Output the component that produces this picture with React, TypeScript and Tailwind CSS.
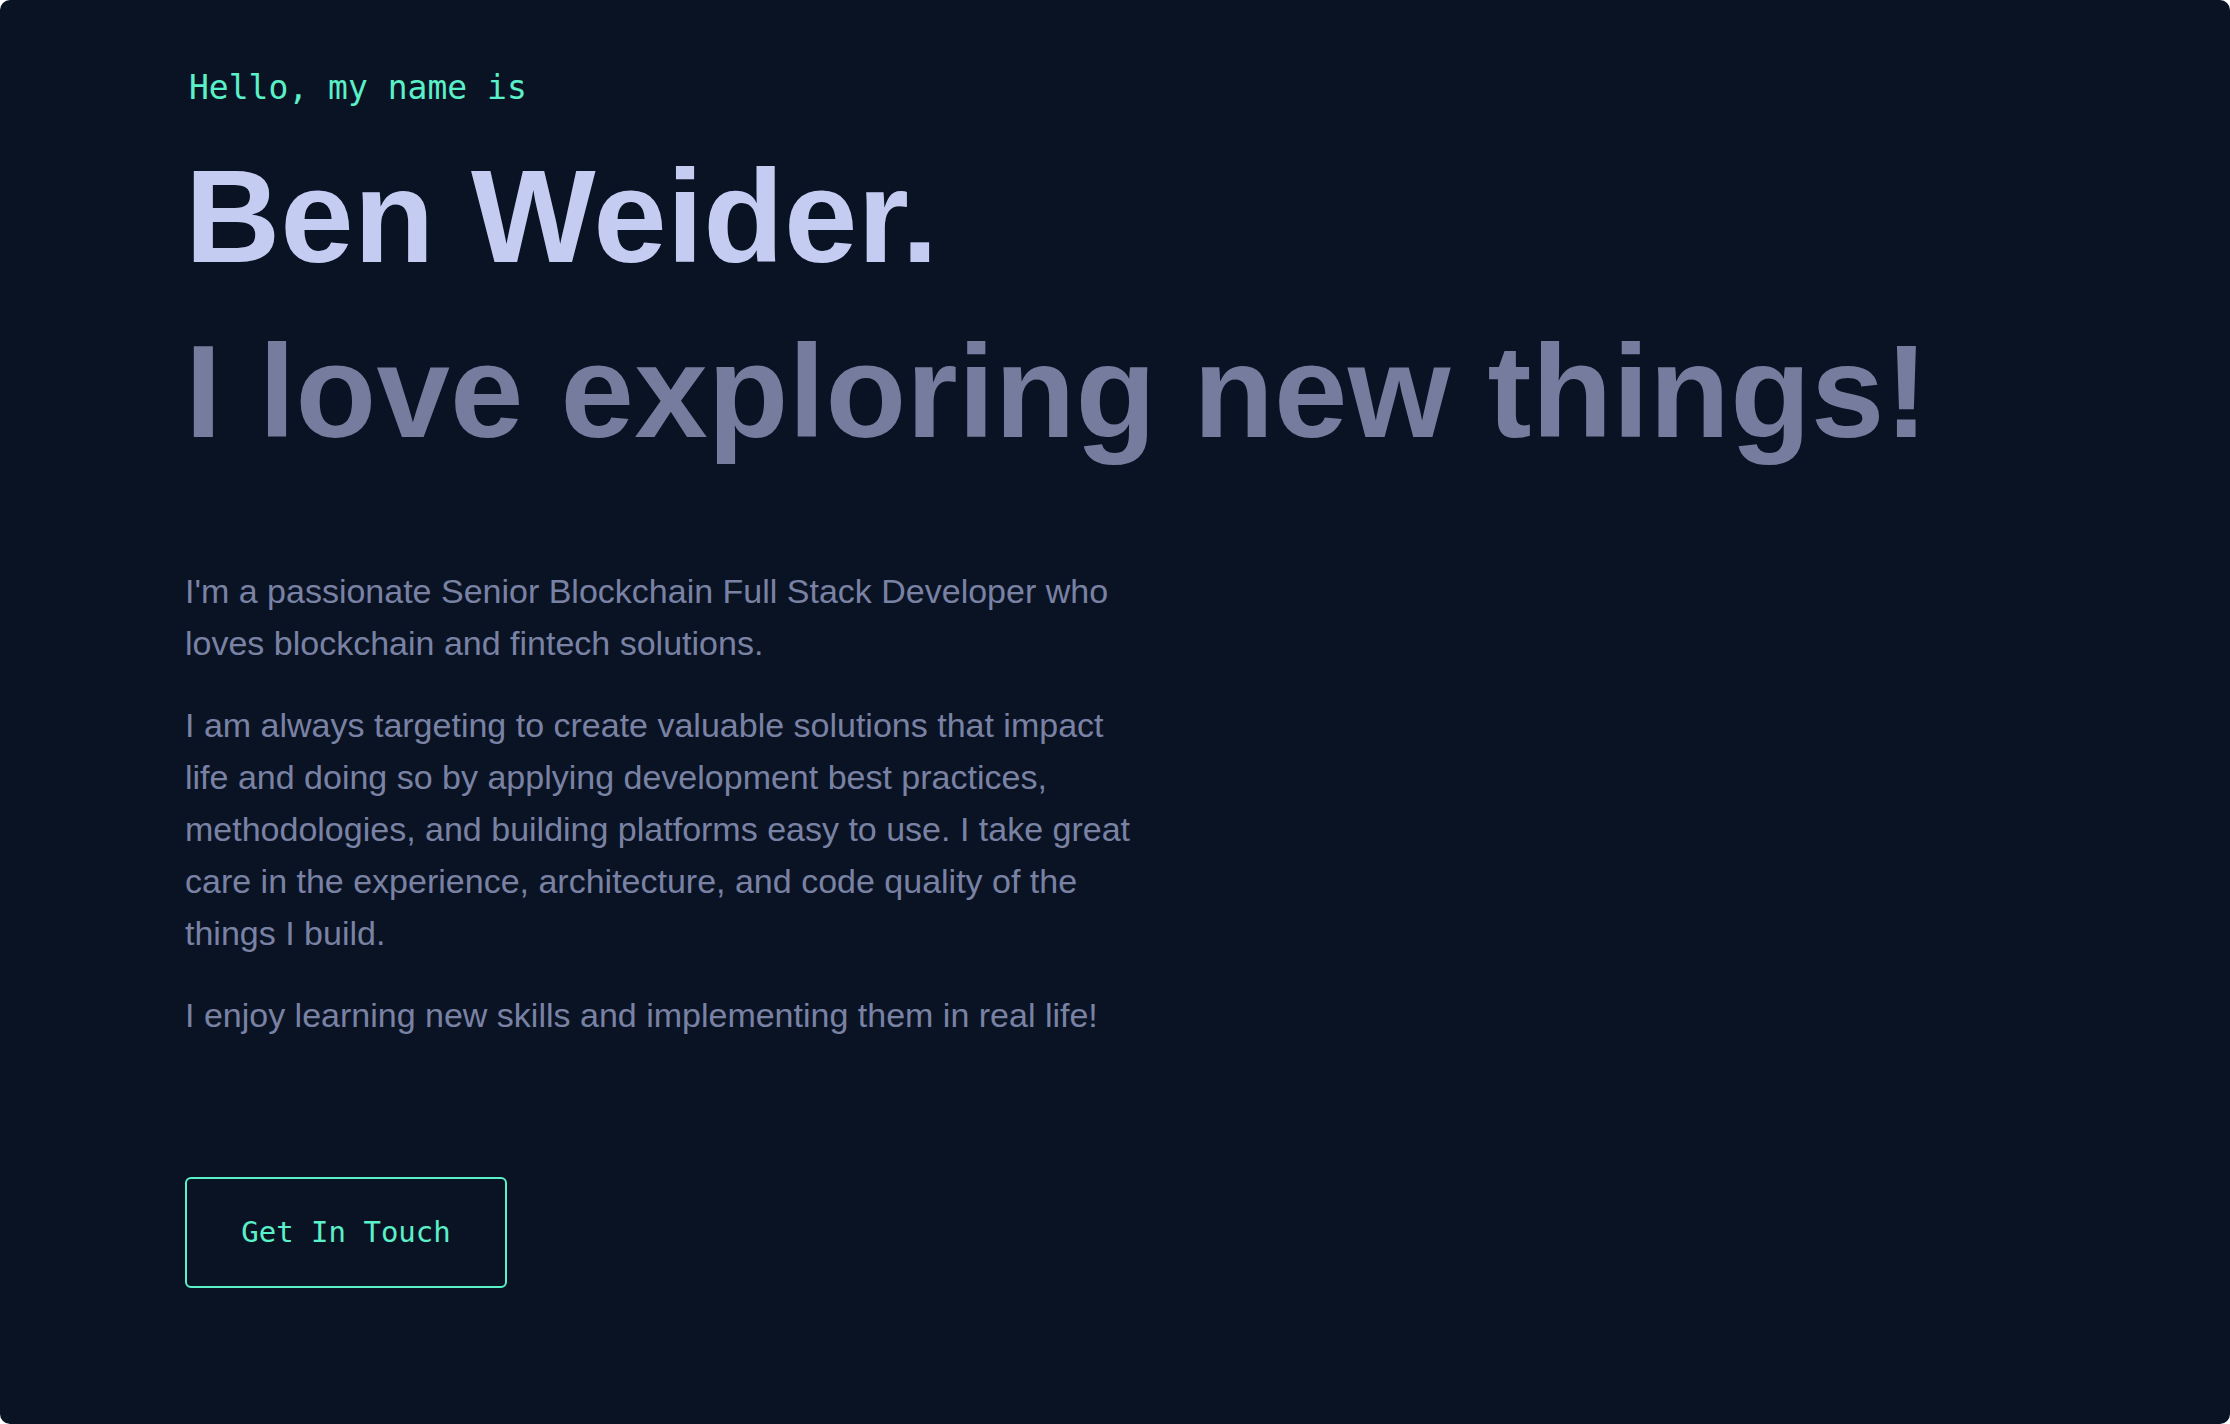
import React from "react";

const paragraphs = [
  "I'm a passionate Senior Blockchain Full Stack Developer who loves blockchain and fintech solutions.",
  "I am always targeting to create valuable solutions that impact life and doing so by applying development best practices, methodologies, and building platforms easy to use. I take great care in the experience, architecture, and code quality of the things I build.",
  "I enjoy learning new skills and implementing them in real life!",
];

const mono = "font-['DejaVu_Sans_Mono','Liberation_Mono',monospace]";
const sans = "font-['Liberation_Sans',Arial,sans-serif]";

const App: React.FC = () => {
  return (
    <div className="min-h-screen bg-white">
      <section className="h-[1424px] rounded-[10px] bg-[#0a1324] pl-[185px] pt-[72px]">
        <p className={`${mono} ml-[4px] text-[33px] leading-[32px] text-[#5af0c8]`}>
          Hello, my name is
        </p>

        <h1
          className={`${sans} mt-[25px] text-[132px] font-bold leading-[175px] text-[#c5ccf2]`}
        >
          Ben Weider.
        </h1>
        <h2
          className={`${sans} text-[132px] font-bold leading-[175px] tracking-[0.2px] text-[#757c9e]`}
        >
          I love exploring new things!
        </h2>

        <div className="mt-[86px] max-w-[955px] space-y-[30px]">
          {paragraphs.map((text) => (
            <p
              key={text}
              className={`${sans} text-[34px] leading-[52px] text-[#7a82a4]`}
            >
              {text}
            </p>
          ))}
        </div>

        <button
          className={`${mono} mt-[136px] flex h-[111px] w-[322px] items-center justify-center rounded-[6px] border-2 border-[#5af0c8] text-[29px] text-[#5af0c8]`}
        >
          Get In Touch
        </button>
      </section>
    </div>
  );
};

export default App;
